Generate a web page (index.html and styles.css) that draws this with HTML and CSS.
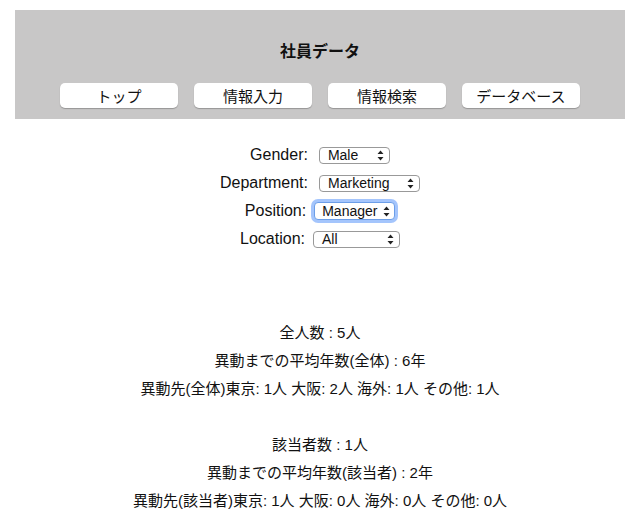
FILE: index.html
```html
<!DOCTYPE html>
<html lang="ja">
<head>
<meta charset="utf-8">
<title>社員データ</title>
<link rel="stylesheet" href="styles.css">
</head>
<body>
<div class="page">
  <header class="header">
    <h1 class="title">社員データ</h1>
    <nav class="nav">
      <button class="nav-btn">トップ</button>
      <button class="nav-btn">情報入力</button>
      <button class="nav-btn">情報検索</button>
      <button class="nav-btn">データベース</button>
    </nav>
  </header>

  <form class="filters">
    <div class="row">
      <label class="label">Gender:</label>
      <span class="sel w-gender"><span class="sel-text">Male</span><svg class="arrows" width="7" height="11" viewBox="0 0 7 11"><path d="M3.5 0.5 L6.5 4 H0.5 Z M3.5 10.5 L6.5 7 H0.5 Z" fill="#222"/></svg></span>
    </div>
    <div class="row">
      <label class="label">Department:</label>
      <span class="sel w-dept"><span class="sel-text">Marketing</span><svg class="arrows" width="7" height="11" viewBox="0 0 7 11"><path d="M3.5 0.5 L6.5 4 H0.5 Z M3.5 10.5 L6.5 7 H0.5 Z" fill="#222"/></svg></span>
    </div>
    <div class="row">
      <label class="label">Position:</label>
      <span class="sel w-pos focused"><span class="sel-text">Manager</span><svg class="arrows" width="7" height="11" viewBox="0 0 7 11"><path d="M3.5 0.5 L6.5 4 H0.5 Z M3.5 10.5 L6.5 7 H0.5 Z" fill="#222"/></svg></span>
    </div>
    <div class="row">
      <label class="label">Location:</label>
      <span class="sel w-loc"><span class="sel-text">All</span><svg class="arrows" width="7" height="11" viewBox="0 0 7 11"><path d="M3.5 0.5 L6.5 4 H0.5 Z M3.5 10.5 L6.5 7 H0.5 Z" fill="#222"/></svg></span>
    </div>
  </form>

  <section class="stats">
    <div class="group">
      <p class="line">全人数 : 5人</p>
      <p class="line">異動までの平均年数(全体) : 6年</p>
      <p class="line">異動先(全体)東京: 1人 大阪: 2人 海外: 1人 その他: 1人</p>
    </div>
    <div class="group">
      <p class="line">該当者数 : 1人</p>
      <p class="line">異動までの平均年数(該当者) : 2年</p>
      <p class="line">異動先(該当者)東京: 1人 大阪: 0人 海外: 0人 その他: 0人</p>
    </div>
  </section>
</div>
</body>
</html>
```

FILE: styles.css
```css
html, body {
  margin: 0;
  padding: 0;
  background: #ffffff;
}

body {
  font-family: "Liberation Sans", "Noto Sans CJK JP", sans-serif;
  color: #111111;
}

.page {
  margin: 10px 9px 0 15px;
}

.header {
  background: #c8c7c7;
  height: 109px;
  box-sizing: border-box;
  padding-top: 30px;
  display: flex;
  flex-direction: column;
  align-items: center;
}

.title {
  margin: 0;
  font-size: 16px;
  font-weight: bold;
  line-height: 20px;
  font-family: "Noto Sans CJK JP", sans-serif;
}

.nav {
  margin-top: 23px;
  display: flex;
  gap: 16px;
  justify-content: center;
}

.nav-btn {
  width: 118px;
  height: 25px;
  border: none;
  border-radius: 5px;
  background: #ffffff;
  box-shadow: 0 1px 1px rgba(0, 0, 0, 0.25);
  font-family: "Noto Sans CJK JP", sans-serif;
  font-size: 15px;
  color: #111111;
  padding: 0;
  line-height: 25px;
}

.filters {
  margin-top: 22px;
  display: flex;
  flex-direction: column;
  align-items: center;
}

.row {
  height: 28px;
  display: flex;
  align-items: center;
  justify-content: center;
}

.label {
  font-size: 16px;
  color: #111111;
}

.sel {
  position: relative;
  margin-left: 11px;
  height: 17px;
  box-sizing: border-box;
  border: 1px solid #999999;
  border-radius: 4px;
  background: #ffffff;
  display: flex;
  align-items: center;
  font-size: 14px;
  color: #111111;
}

.sel-text {
  padding-left: 8px;
  line-height: 15px;
}

.arrows {
  position: absolute;
  right: 5px;
  top: 2px;
}

.w-gender { width: 71px; }
.w-dept { width: 101px; margin-left: 11px; }
.w-pos { width: 81px; height: 18px; margin-left: 8px; }
.w-pos .sel-text { padding-left: 7px; }
.w-loc { width: 87px; margin-left: 8px; }

.focused {
  border-color: #6c9ee8;
  box-shadow: 0 0 0 3px rgba(90, 150, 250, 0.55);
}
.focused .arrows { top: 3px; right: 4px; }

.stats {
  margin-top: 66px;
  text-align: center;
}

.group {
  margin-bottom: 28px;
}

.line {
  margin: 0;
  font-size: 15px;
  line-height: 28px;
  font-family: "Liberation Sans", "Noto Sans CJK JP", sans-serif;
}
```
